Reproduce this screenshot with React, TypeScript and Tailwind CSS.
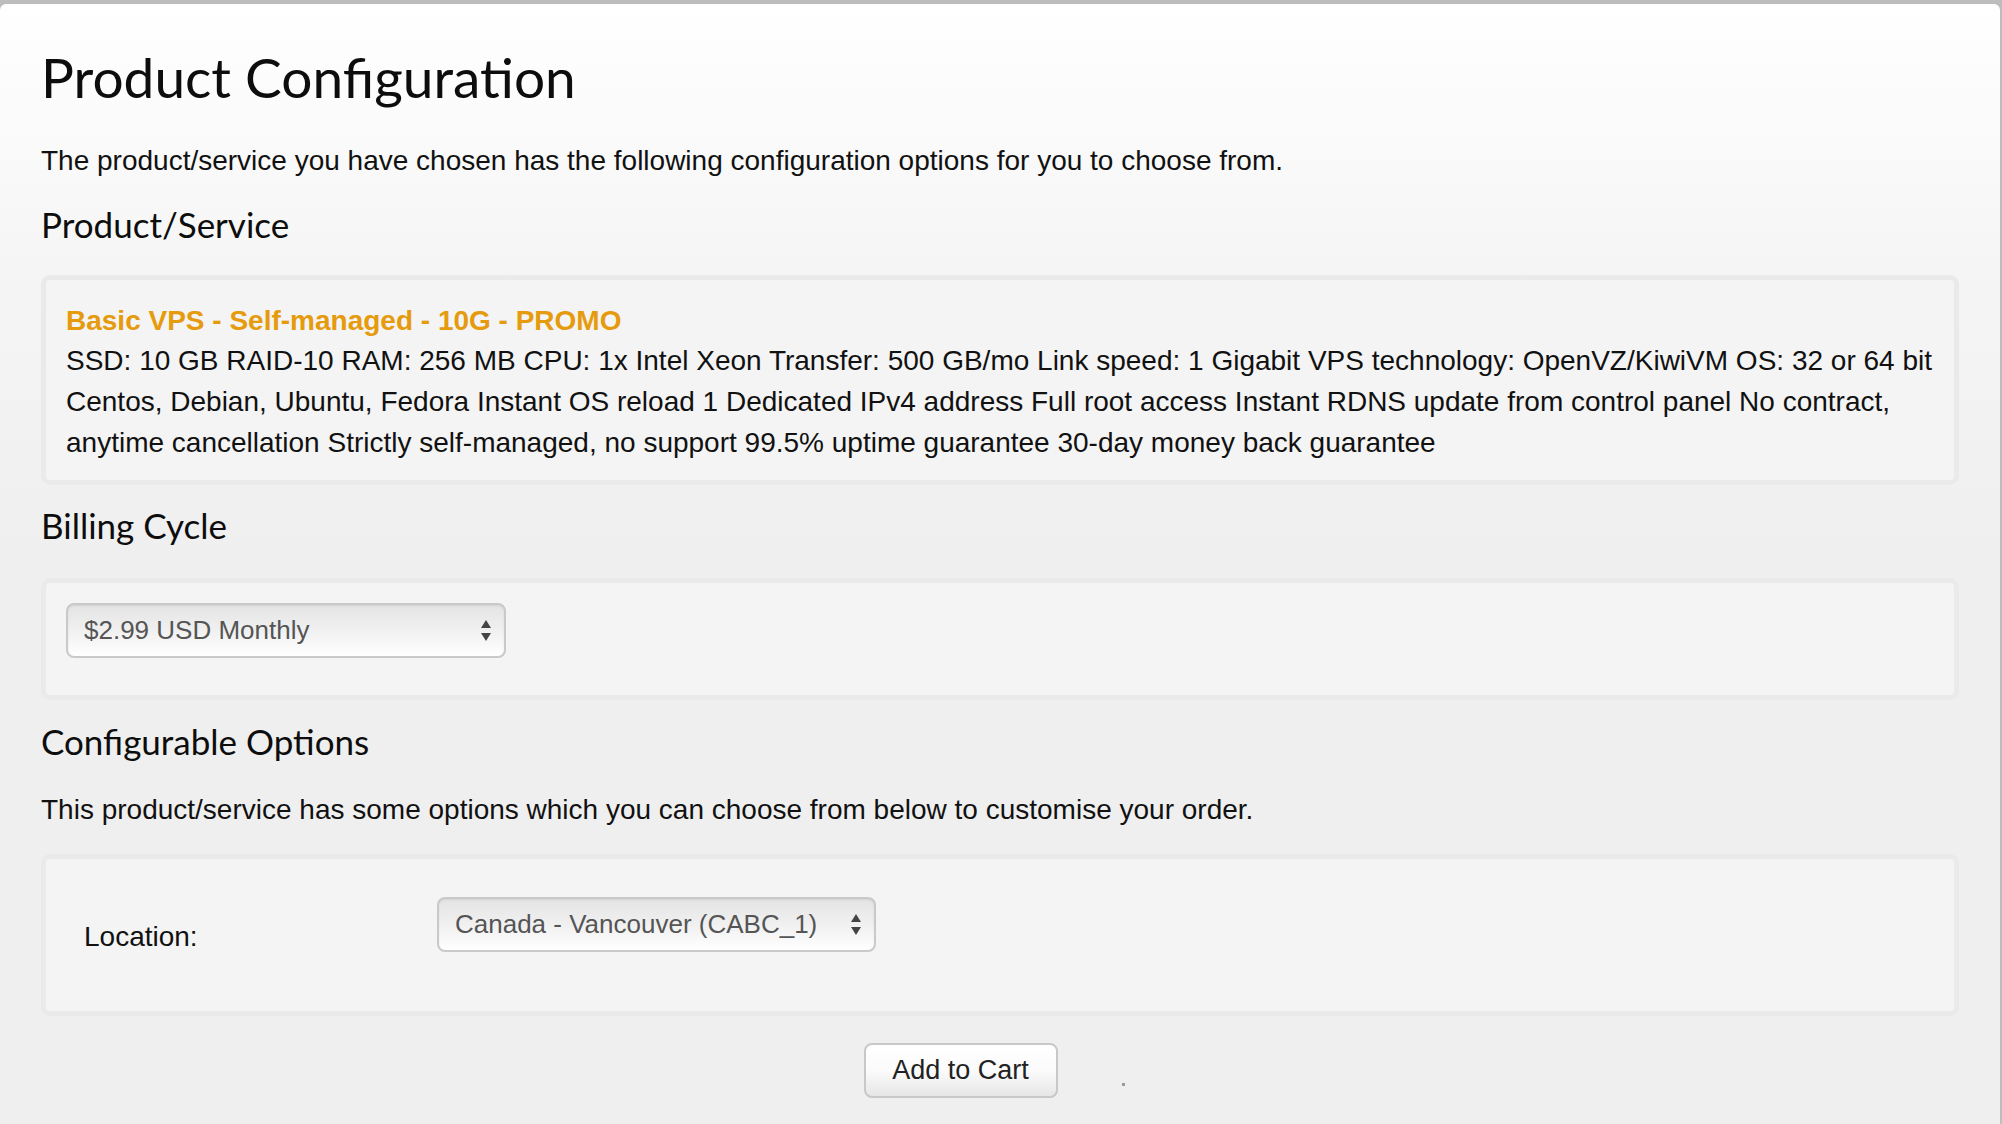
import React from 'react'

const body = "font-['Liberation_Sans',Arial,sans-serif]"
const display = "font-['Lato','Open_Sans',sans-serif]"

function Arrows() {
  return (
    <svg width="12" height="22" viewBox="0 0 12 22" className="pointer-events-none absolute top-1/2 right-[14px] -translate-y-1/2">
      <polygon points="6,0 11,8 1,8" fill="#444" />
      <polygon points="1,13 11,13 6,21" fill="#444" />
    </svg>
  )
}

function FakeSelect({ value, width }: { value: string; width: string }) {
  return (
    <div className={`relative ${width} h-[55px]`}>
      <select
        defaultValue={value}
        className={`${body} h-full w-full appearance-none rounded-[8px] border-2 border-[#c9c9c9] bg-[linear-gradient(to_bottom,#e4e4e4_0%,#f0f0f0_50%,#ffffff_100%)] pl-[16px] pr-10 text-[26px] text-[#555] shadow-[inset_0_1px_2px_rgba(0,0,0,0.08)] outline-none`}
      >
        <option value={value}>{value}</option>
      </select>
      <Arrows />
    </div>
  )
}

function Well({ className, children }: { className: string; children: React.ReactNode }) {
  return (
    <div className={`rounded-[9px] border-[5px] border-[#eaeaea] bg-[#f4f4f4] ${className}`}>{children}</div>
  )
}

export default function App() {
  return (
    <div className="min-h-screen bg-[#bdbdbd] pt-[4px] pr-[2px]">
      <div className="min-h-[1120px] rounded-t-[6px] bg-[linear-gradient(to_bottom,#ffffff_0px,#f4f4f4_300px,#efefef_560px)] px-[41px] pt-[43px] pb-10 text-[#111]">
        <h1 className={`${display} text-[55px] leading-[60px] font-normal text-[#0d0d0d]`}>Product Configuration</h1>
        <p className={`${body} mt-[34px] text-[28px] leading-[40px]`}>
          The product/service you have chosen has the following configuration options for you to choose from.
        </p>

        <h3 className={`${display} mt-[23px] text-[35px] leading-[40px] text-[#0d0d0d]`}>Product/Service</h3>
        <Well className="mt-[31px] pt-[21px] pb-[17px] px-[20px]">
          <div className={`${body} text-[28px] font-bold leading-[39px] text-[#e59b0d]`}>
            Basic VPS - Self-managed - 10G - PROMO
          </div>
          <div className={`${body} text-[28px] leading-[41px]`}>
            SSD: 10 GB RAID-10 RAM: 256 MB CPU: 1x Intel Xeon Transfer: 500 GB/mo Link speed: 1 Gigabit VPS technology:
            OpenVZ/KiwiVM OS: 32 or 64 bit Centos, Debian, Ubuntu, Fedora Instant OS reload 1 Dedicated IPv4 address Full
            root access Instant RDNS update from control panel No contract, anytime cancellation Strictly self-managed, no
            support 99.5% uptime guarantee 30-day money back guarantee
          </div>
        </Well>

        <h3 className={`${display} mt-[20px] text-[35px] leading-[40px] text-[#0d0d0d]`}>Billing Cycle</h3>
        <Well className="mt-[33px] pt-[20px] pb-[37px] px-[20px]">
          <FakeSelect value="$2.99 USD Monthly" width="w-[440px]" />
        </Well>

        <h3 className={`${display} mt-[21px] text-[35px] leading-[40px] text-[#0d0d0d]`}>Configurable Options</h3>
        <p className={`${body} mt-[29px] text-[28px] leading-[40px]`}>
          This product/service has some options which you can choose from below to customise your order.
        </p>
        <Well className="mt-[24px] pt-[38px] pb-[54px] pl-[38px]">
          <div className="flex items-start">
            <label className={`${body} mt-[20px] w-[353px] text-[28px] leading-[40px]`}>Location:</label>
            <FakeSelect value="Canada - Vancouver (CABC_1)" width="w-[439px]" />
          </div>
        </Well>

        <div className="mt-[27px] flex items-center justify-center gap-[64px]">
          <button
            className={`${body} h-[55px] w-[194px] rounded-[8px] border-2 border-[#c8c8c8] bg-[linear-gradient(to_bottom,#ffffff_0%,#fbfbfb_50%,#e6e6e6_100%)] text-[27px] text-[#222]`}
          >
            Add to Cart
          </button>
          <span className="mt-[28px] mr-[12px] inline-block h-[3px] w-[3px] bg-[#999]" />
        </div>
      </div>
    </div>
  )
}
